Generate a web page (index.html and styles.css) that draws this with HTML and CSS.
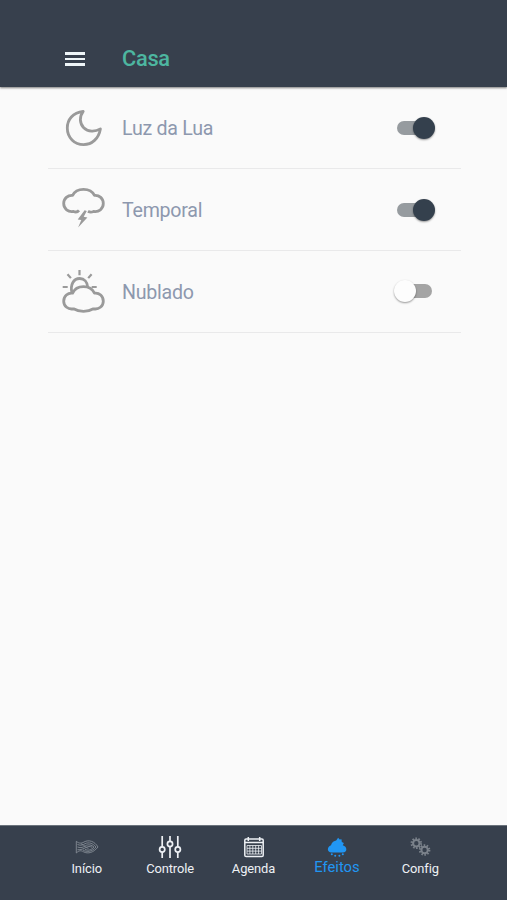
FILE: index.html
```
<!DOCTYPE html>
<html lang="pt-BR">
<head>
    <meta charset="UTF-8">
    <title>Casa</title>
    <link rel="stylesheet" href="styles.css">
</head>
<body>
    <header class="topbar">
        <a class="menu" href="javascript:;"><span></span><span></span><span></span></a>
        <h1>Casa</h1>
    </header>

    <ul class="list">
        <li>
            <svg class="icon" viewBox="0 0 44 44">
                <path d="M22.2 5.3C11.8 6.6 6.3 13.6 6.3 22C6.3 31.6 13.5 38.6 22.6 38.6C31 38.6 37.7 32.6 39.4 22.9C34 26 27 26 22.7 21.7C18.5 17.4 18.2 10.6 22.2 5.3Z"/>
            </svg>
            <span class="name">Luz da Lua</span>
            <span class="switch on"></span>
        </li>
        <li>
            <svg class="icon" viewBox="0 0 44 44">
                <path d="M18 22.3C16.6 24 14.4 24.3 12.5 23.4C7.2 24.4 2.7 20.8 2.7 15.6C2.7 10.4 6.8 7 11.6 7.4C13.5 3.3 17.7 1.3 22.5 1.3C27.7 1.3 31.5 3.2 33.5 7.4C38.3 7 42.3 10.4 42.3 15.6C42.3 20.8 37.8 24.4 32.5 23.4C30.6 24.3 28.6 24.2 27 23.2"/>
                <path class="solid" d="M23.6 22.2L16.7 31.5L20.3 32.1L17.1 39.5L26.4 29.4L22.7 28.7L25.8 23Z"/>
            </svg>
            <span class="name">Temporal</span>
            <span class="switch on"></span>
        </li>
        <li>
            <svg class="icon" viewBox="0 0 44 44">
                <path d="M12.5 39.8C7.2 40.8 2.7 37.2 2.7 32.2C2.7 27 6.8 23.6 11.6 24.2C13.5 19.9 17.7 17.7 22.5 17.7C27.7 17.7 31.5 19.9 33.5 24.2C38.3 23.6 42.3 27 42.3 32.2C42.3 37.2 37.8 40.8 32.5 39.8C26.5 43.3 18.5 43.3 12.5 39.8Z"/>
                <path d="M11 23.8C8.9 16 12.5 9.5 18.7 9.5C23.2 9.5 26.4 13 26.7 18.2"/>
                <path class="rays" d="M18.5 1V6.2M6.5 5.2L9.9 9.1M30.6 5.2L27.2 9.1M1.7 18H6.7M30.7 18H35.7"/>
            </svg>
            <span class="name">Nublado</span>
            <span class="switch"></span>
        </li>
    </ul>

    <nav class="tabs">
        <a href="javascript:;">
            <svg class="dim" viewBox="0 0 24 24">
                <path d="M1.3 6.3C4 8.6 6.5 8.6 9 7C14 4.4 19.5 6.2 23 12C18.5 17.6 13 19.2 8.5 16.8C6 15.2 4 15.4 1.3 18Z"/>
                <path d="M2.5 9.5C6 11 8 9.8 10 8.7C14 6.8 18 8.4 21 12M2.5 12C6 13.5 8.5 12 10.5 10.7C13.5 9 16.5 10 19 12M2.5 14.7C6 15 8.5 13.8 10.8 12.5C13 11.3 15 11.2 17 12.2M8 15C12 17.5 17 16.8 21 12M10 14.2C13 16 16.3 15 19 12M6 8.7C10 10.5 10.5 13 13.5 13.3"/>
            </svg>
            <span>Início</span>
        </a>
        <a href="javascript:;">
            <svg class="mixer" viewBox="0 0 24 24">
                <path d="M4.2 1V12M4.2 17.2V23M12 1V6.4M12 11.6V23M19.8 1V12M19.8 17.2V23"/>
                <circle cx="4.2" cy="14.5" r="2.6"/>
                <circle cx="12" cy="9" r="2.6"/>
                <circle cx="19.8" cy="14.5" r="2.6"/>
            </svg>
            <span>Controle</span>
        </a>
        <a href="javascript:;">
            <svg viewBox="0 0 24 24">
                <rect x="2.8" y="4" width="18.4" height="17.6" rx="1.3"/>
                <path d="M6.3 2V6M17.7 2V6M2.8 7.5H21.2"/>
                <path class="grid" d="M5 10.5H19.5M5 13.3H19.5M5 16.1H19.5M5 19H19.5M5 10.5V19M7.9 10.5V19M10.8 10.5V19M13.7 10.5V19M16.6 10.5V19M19.5 10.5V19"/>
            </svg>
            <span>Agenda</span>
        </a>
        <a class="active" href="javascript:;">
            <svg viewBox="0 0 24 24">
                <path class="fill" d="M6.7 17.5C1.6 17.5 1.8 11.5 6 10.2C6.7 7.2 9.3 5.8 11.2 5.6L13.1 2.8L14.7 4.5L16.5 4.2L16.8 6.9L18.9 8L17.8 10.2C22.3 11.3 22.8 17.5 17.8 17.5Z"/>
                <circle class="fill" cx="6.8" cy="19.3" r="1"/>
                <circle class="fill" cx="10.2" cy="20.8" r="1"/>
                <circle class="fill" cx="14.4" cy="20.8" r="1"/>
                <circle class="fill" cx="17.8" cy="19.3" r="1"/>
            </svg>
            <span>Efeitos</span>
        </a>
        <a href="javascript:;">
            <svg class="dim gears" viewBox="0 0 24 24">
                <circle cx="8.3" cy="8.3" r="3.2"/>
                <circle class="teeth" cx="8.3" cy="8.3" r="4.6"/>
                <circle cx="16.6" cy="15" r="3.2"/>
                <circle class="teeth" cx="16.6" cy="15" r="4.6"/>
            </svg>
            <span>Config</span>
        </a>
    </nav>
</body>
</html>
```
FILE: styles.css
```
*{margin:0;padding:0;box-sizing:border-box;}
body{height:900px;display:flex;flex-direction:column;background:#fafafa;font-family:Roboto,"Liberation Sans",sans-serif;overflow:hidden;}
ul{list-style:none;}
a{text-decoration:none;color:inherit;}
svg{fill:none;stroke:currentColor;overflow:visible;}

/* header */
.topbar{height:87px;flex:none;padding:31px 0 0 65px;display:flex;align-items:center;background:#37404d;box-shadow:0 1px 2px rgba(0,0,0,.5);}
.menu{width:20px;display:flex;flex-direction:column;gap:3px;}
.menu span{height:2.5px;background:#eef5f8;}
.topbar h1{margin-left:37px;font-size:21.8px;letter-spacing:-.3px;font-weight:500;line-height:26px;color:#4db6a0;}

/* effects */
.list{flex:1;padding:.6px 46px 0 48px;}
.list li{height:81.7px;padding:0 26px 0 13px;display:flex;align-items:center;border-bottom:1px solid #e9e9ea;}
.icon{width:44px;height:44px;color:#9a9a9a;stroke-width:2.8;stroke-linejoin:round;}
.rays{stroke-width:2.2;}
.solid{fill:currentColor;stroke:none;}
.name{margin-left:17px;padding-top:1.6px;flex:1;font-size:19.6px;letter-spacing:-.25px;color:#8d98ae;}

.switch{width:35px;height:14px;border-radius:7px;background:#a4a4a4;display:flex;align-items:center;margin-right:3.5px;}
.switch::before{content:"";flex:none;width:22px;height:22px;margin-left:-3px;border-radius:50%;background:#fdfdfd;box-shadow:0 1px 2px rgba(0,0,0,.4);}
.switch.on{background:#969b9f;justify-content:flex-end;}
.switch.on::before{margin:0 -3px 0 0;background:#34404d;}

/* tabs */
.tabs{height:75px;flex:none;padding:9px 45px 0;display:flex;background:#37404d;color:#eef1f5;border-top:1px solid #6b737c;}
.tabs a{flex:1;display:flex;flex-direction:column;align-items:center;gap:2px;font-size:12.9px;letter-spacing:-.1px;line-height:16px;}
.tabs svg{width:24px;height:24px;stroke-width:1.5;}
.tabs .mixer{stroke-width:1.7;}
.tabs .dim{color:#858c95;stroke-width:.9;}
.tabs .gears{color:#7b828b;stroke-width:2;}
.tabs .grid{stroke-width:.8;}
.tabs .fill{fill:currentColor;stroke:none;}
.tabs .teeth{stroke-width:2.4;stroke-dasharray:1.5 1.39;}
.tabs .active{font-size:14.8px;letter-spacing:0;color:#2196f3;}
.tabs .active span{margin-top:-2px;}
```
